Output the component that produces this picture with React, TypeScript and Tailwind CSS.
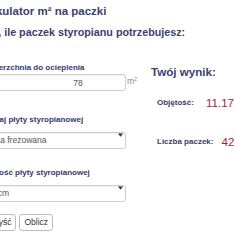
import React from 'react'

type Option = { value: string; label: string }

const rodzaje: Option[] = [
  { value: 'frez', label: 'Płyta frezowana' },
  { value: 'gladka', label: 'Płyta gładka' },
]

const grubosci: Option[] = [
  { value: '10', label: '10 cm' },
  { value: '12', label: '12 cm' },
  { value: '15', label: '15 cm' },
]

function Label({ children }: { children: React.ReactNode }) {
  return (
    <label className="block text-[8px] leading-[10px] font-bold text-[#353a6b] whitespace-nowrap">
      {children}
    </label>
  )
}

function Select({ options }: { options: Option[] }) {
  return (
    <div className="relative w-[146px] h-[17px]">
      <select
        defaultValue={options[0].value}
        className="appearance-none w-full h-full rounded-[3px] border border-[#cfcfcf] bg-white pl-[5px] text-[8.5px] leading-[15px] text-[#555] shadow-[inset_0_1px_1px_rgba(0,0,0,0.06)] outline-none"
      >
        {options.map((o) => (
          <option key={o.value} value={o.value}>
            {o.label}
          </option>
        ))}
      </select>
      {/* arrow */}
      <svg
        className="absolute right-[3px] top-[7px] pointer-events-none"
        width="5"
        height="4"
        viewBox="0 0 5 4"
      >
        <path d="M0 0.5h5L2.5 3.8z" fill="#333" />
      </svg>
    </div>
  )
}

export default function App() {
  return (
    <div className="w-[236px] h-[236px] overflow-hidden bg-white font-['Liberation_Sans',Arial,sans-serif]">
      <div className="-ml-[20px] w-[260px] pt-[4px]">
        {/* Header */}
        <h1 className="-ml-[2px] text-[11.5px] leading-[14px] font-bold text-[#3b3f6e] whitespace-nowrap">
          Kalkulator m² na paczki
        </h1>
        <h2 className="-ml-[26px] mt-[8px] text-[10.75px] leading-[13px] font-bold text-[#3b3f6e] whitespace-nowrap">
          Sprawdź, ile paczek styropianu potrzebujesz:
        </h2>

        <div className="flex items-start mt-[24px]">
          {/* Form */}
          <div className="flex flex-col w-[157px]">
            <Label>Powierzchnia do ocieplenia</Label>
            <div className="flex items-start mt-[1px]">
              <input
                type="text"
                defaultValue="78"
                className="w-[146px] h-[17px] rounded-[3px] border border-[#cfcfcf] bg-white pl-[50px] text-center text-[8.5px] text-[#555] shadow-[inset_0_1px_1px_rgba(0,0,0,0.06)] outline-none"
              />
              <span className="ml-[1px] mt-[2px] text-[8.5px] leading-[10px] text-[#888]">
                m<sup className="text-[5.5px]">2</sup>
              </span>
            </div>

            <div className="mt-[24px]">
              <Label>Rodzaj płyty styropianowej</Label>
            </div>
            <div className="mt-[1px]">
              <Select options={rodzaje} />
            </div>

            <div className="mt-[25px]">
              <Label>Grubość płyty styropianowej</Label>
            </div>
            <div className="mt-[1px]">
              <Select options={grubosci} />
            </div>

            <div className="-ml-[7px] mt-[18px] flex gap-[3px]">
              <button className="h-[17px] px-[4px] rounded-[3px] border border-[#bdbdbd] bg-white text-[8.5px] text-[#333]">
                Wyczyść
              </button>
              <button className="h-[17px] px-[4px] rounded-[3px] border border-[#bdbdbd] bg-white text-[8.5px] text-[#333]">
                Oblicz
              </button>
            </div>
          </div>

          {/* Result */}
          <div className="ml-[14px] pt-[2px] flex flex-col">
            <h3 className="text-[11.6px] leading-[14px] font-bold text-[#3b3f6e] whitespace-nowrap">
              Twój wynik:
            </h3>
            <div className="ml-[6px] mt-[17px] flex items-center gap-[12px] whitespace-nowrap">
              <span className="text-[8px] font-bold text-[#3b4063]">Objętość:</span>
              <span className="text-[11.6px] leading-[14px] text-[#a3233c]">11.17</span>
            </div>
            <div className="ml-[6px] mt-[25px] flex items-center gap-[8px] whitespace-nowrap">
              <span className="text-[8px] font-bold text-[#3b4063]">Liczba paczek:</span>
              <span className="text-[11.6px] leading-[14px] text-[#a3233c]">42</span>
            </div>
          </div>
        </div>
      </div>
    </div>
  )
}
